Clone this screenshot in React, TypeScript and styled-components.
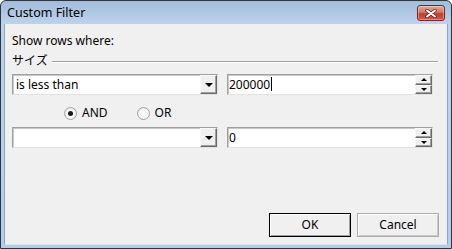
import React from 'react';
import styled, { createGlobalStyle } from 'styled-components';

const GlobalStyle = createGlobalStyle`
  html, body {
    margin: 0;
    padding: 0;
    background: #ffffff;
  }
  body {
    font-family: "Noto Sans", "Noto Sans CJK JP", sans-serif;
    font-size: 12px;
    color: #000;
  }
`;

const Window = styled.div`
  width: 452px;
  height: 249px;
  box-sizing: border-box;
  border: 1px solid #2c3642;
  border-radius: 6px 6px 0 0;
  background: linear-gradient(to bottom, #a2bcda 0px, #bcd3ec 23px, #b4cde8 100%);
  padding: 0 3px 3px 3px;
  display: flex;
  flex-direction: column;
  overflow: hidden;
`;

const TitleBar = styled.div`
  height: 23px;
  display: flex;
  align-items: center;
  justify-content: space-between;
  padding: 0 3px 0 3px;
`;

const Title = styled.span`
  font-size: 12.5px;
  line-height: 16px;
  margin-top: 1px;
`;

const CloseButton = styled.div`
  width: 28px;
  height: 16px;
  box-sizing: border-box;
  margin-top: 1px;
  border: 1px solid #6e2a22;
  border-radius: 3px;
  background: linear-gradient(to bottom, #e6a89c 0%, #d67564 45%, #c2412f 55%, #c85a45 100%);
  box-shadow: inset 0 0 0 1px rgba(255, 255, 255, 0.35);
  display: flex;
  align-items: center;
  justify-content: center;
`;

const Client = styled.div`
  flex: 1;
  background: #f0f0f0;
  border-left: 1px solid #8aa4c2;
  border-right: 1px solid #8aa4c2;
  border-bottom: 1px solid #d8e6f4;
  display: flex;
  flex-direction: column;
  padding: 0 14px 7px 7px;
`;

const Label = styled.div`
  height: 15px;
  line-height: 15px;
  margin-top: 9px;
`;

const GroupHeader = styled.div`
  height: 14px;
  margin-top: 6px;
  margin-right: -5px;
  display: flex;
  align-items: center;
  gap: 4px;
  line-height: 14px;
`;

const GroupLine = styled.div`
  flex: 1;
  height: 1px;
  background: #a0a0a0;
  box-shadow: 0 1px 0 #ffffff;
  margin-top: 1px;
`;

const FieldRow = styled.div<{ $top: number }>`
  display: flex;
  gap: 9px;
  height: 21px;
  margin-top: ${(p) => p.$top}px;
`;

const Field = styled.div`
  flex: 1;
  box-sizing: border-box;
  height: 21px;
  background: #ffffff;
  border: 1px solid;
  border-color: #a0a0a0 #e3e3e3 #e3e3e3 #a0a0a0;
  box-shadow: inset 1px 1px 0 #c8c8c8;
  display: flex;
  align-items: center;
`;

const FieldText = styled.span<{ $pad: number }>`
  flex: 1;
  padding-left: ${(p) => p.$pad}px;
  line-height: 19px;
  white-space: nowrap;
`;

const Caret = styled.span`
  display: inline-block;
  width: 1px;
  height: 14px;
  background: #000;
  vertical-align: -2px;
  margin-left: 1px;
`;

const RaisedButton = styled.div`
  box-sizing: border-box;
  background: #f0f0f0;
  border: 1px solid;
  border-color: #f8f8f8 #696969 #696969 #f8f8f8;
  box-shadow: inset -1px -1px 0 #a0a0a0;
  display: flex;
  align-items: center;
  justify-content: center;
`;

const DropButton = styled(RaisedButton)`
  width: 17px;
  height: 19px;
`;

const SpinStack = styled.div`
  width: 17px;
  height: 19px;
  display: flex;
  flex-direction: column;
`;

const SpinButton = styled(RaisedButton)`
  flex: 1;
`;

const Arrow = styled.span<{ $w: number; $h: number; $up?: boolean }>`
  width: 0;
  height: 0;
  border-left: ${(p) => p.$w}px solid transparent;
  border-right: ${(p) => p.$w}px solid transparent;
  ${(p) =>
    p.$up
      ? `border-bottom: ${p.$h}px solid #000;`
      : `border-top: ${p.$h}px solid #000;`}
`;

const RadioRow = styled.div`
  height: 14px;
  margin-top: 11px;
  padding-left: 52px;
  display: flex;
  align-items: center;
  gap: 29px;
`;

const RadioOption = styled.label`
  display: flex;
  align-items: center;
  gap: 5px;
  line-height: 14px;
`;

const RadioCircle = styled.span<{ $checked?: boolean }>`
  width: 13px;
  height: 13px;
  box-sizing: border-box;
  border-radius: 50%;
  border: 1px solid #9ea3a8;
  background: radial-gradient(circle at 60% 60%, #ffffff 0%, #f4f4f4 55%, #dcdcdc 100%);
  display: flex;
  align-items: center;
  justify-content: center;
  &::after {
    content: '';
    width: 5px;
    height: 5px;
    border-radius: 50%;
    background: ${(p) => (p.$checked ? '#1a1a1a' : 'transparent')};
  }
`;

const ButtonRow = styled.div`
  margin-top: auto;
  margin-right: -6px;
  display: flex;
  justify-content: flex-end;
  gap: 6px;
`;

const DialogButton = styled.div<{ $default?: boolean }>`
  width: 82px;
  height: 24px;
  box-sizing: border-box;
  background: #f0f0f0;
  border: 1px solid ${(p) => (p.$default ? '#000000' : '#adadad')};
  box-shadow: ${(p) =>
    p.$default
      ? 'inset 1px 1px 0 #ffffff, inset -1px -1px 0 #a0a0a0'
      : 'inset 1px 1px 0 #ffffff, inset -1px -1px 0 #c8c8c8'};
  display: flex;
  align-items: center;
  justify-content: center;
  line-height: 16px;
`;

const CloseIcon = () => (
  <svg width="12" height="9" viewBox="0 0 12 9">
    <path d="M2 1.5 L10 7.5 M10 1.5 L2 7.5" stroke="#5a1f18" strokeWidth="3.4" strokeLinecap="round" />
    <path d="M2 1.5 L10 7.5 M10 1.5 L2 7.5" stroke="#ffffff" strokeWidth="2" strokeLinecap="round" />
  </svg>
);

const ComboBox: React.FC<{ value: string }> = ({ value }) => (
  <Field>
    <FieldText $pad={3}>{value}</FieldText>
    <DropButton>
      <Arrow $w={4} $h={4} />
    </DropButton>
  </Field>
);

const SpinBox: React.FC<{ value: string; focused?: boolean }> = ({ value, focused }) => (
  <Field>
    <FieldText $pad={1}>
      {value}
      {focused && <Caret />}
    </FieldText>
    <SpinStack>
      <SpinButton>
        <Arrow $w={3} $h={3} $up />
      </SpinButton>
      <SpinButton>
        <Arrow $w={3} $h={3} />
      </SpinButton>
    </SpinStack>
  </Field>
);

const App: React.FC = () => (
  <>
    <GlobalStyle />
    <Window>
      <TitleBar>
        <Title>Custom Filter</Title>
        <CloseButton>
          <CloseIcon />
        </CloseButton>
      </TitleBar>
      <Client>
        <Label>Show rows where:</Label>
        <GroupHeader>
          <span>サイズ</span>
          <GroupLine />
        </GroupHeader>
        <FieldRow $top={6}>
          <ComboBox value="is less than" />
          <SpinBox value="200000" focused />
        </FieldRow>
        <RadioRow>
          <RadioOption>
            <RadioCircle $checked />
            AND
          </RadioOption>
          <RadioOption>
            <RadioCircle />
            OR
          </RadioOption>
        </RadioRow>
        <FieldRow $top={7}>
          <ComboBox value="" />
          <SpinBox value="0" />
        </FieldRow>
        <ButtonRow>
          <DialogButton $default>OK</DialogButton>
          <DialogButton>Cancel</DialogButton>
        </ButtonRow>
      </Client>
    </Window>
  </>
);

export default App;
